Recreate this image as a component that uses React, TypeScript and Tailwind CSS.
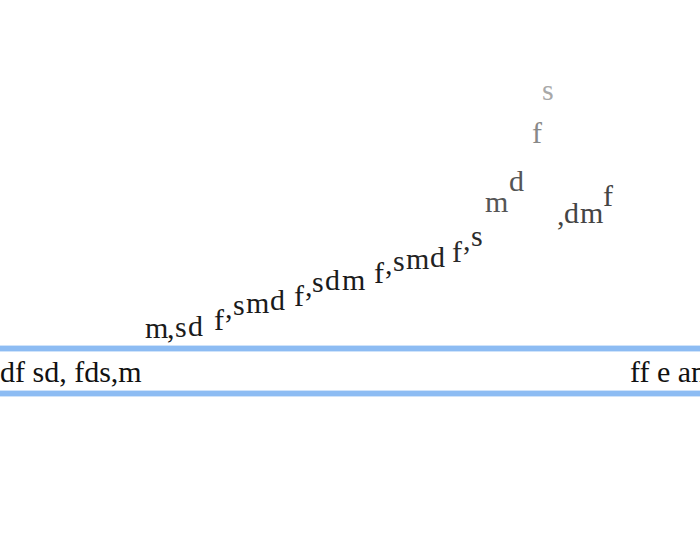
const letters: { ch: string; x: number; base: number; color: string }[] = [
  { ch: "m", x: 145, base: 338, color: "text-[#1a1a1a]" },
  { ch: ",", x: 167, base: 338, color: "text-[#1a1a1a]" },
  { ch: "s", x: 175, base: 337, color: "text-[#1a1a1a]" },
  { ch: "d", x: 188, base: 336, color: "text-[#1a1a1a]" },
  { ch: "f", x: 214, base: 330, color: "text-[#1a1a1a]" },
  { ch: ",", x: 225, base: 318, color: "text-[#1a1a1a]" },
  { ch: "s", x: 233, base: 315, color: "text-[#1a1a1a]" },
  { ch: "m", x: 246, base: 313, color: "text-[#1a1a1a]" },
  { ch: "d", x: 270, base: 310, color: "text-[#1a1a1a]" },
  { ch: "f", x: 294, base: 306, color: "text-[#1a1a1a]" },
  { ch: ",", x: 305, base: 296, color: "text-[#1a1a1a]" },
  { ch: "s", x: 312, base: 292, color: "text-[#1a1a1a]" },
  { ch: "d", x: 325, base: 290, color: "text-[#1a1a1a]" },
  { ch: "m", x: 342, base: 290, color: "text-[#1a1a1a]" },
  { ch: "f", x: 374, base: 283, color: "text-[#1a1a1a]" },
  { ch: ",", x: 385, base: 274, color: "text-[#1a1a1a]" },
  { ch: "s", x: 393, base: 271, color: "text-[#222]" },
  { ch: "m", x: 406, base: 269, color: "text-[#222]" },
  { ch: "d", x: 430, base: 267, color: "text-[#222]" },
  { ch: "f", x: 452, base: 262, color: "text-[#2a2a2a]" },
  { ch: ",", x: 463, base: 250, color: "text-[#2a2a2a]" },
  { ch: "s", x: 471, base: 246, color: "text-[#2a2a2a]" },
  { ch: "m", x: 485, base: 212, color: "text-[#555]" },
  { ch: "d", x: 509, base: 191, color: "text-[#555]" },
  { ch: "f", x: 532, base: 143, color: "text-[#888]" },
  { ch: "s", x: 542, base: 100, color: "text-[#a8a8a8]" },
  { ch: ",", x: 557, base: 225, color: "text-[#444]" },
  { ch: "d", x: 564, base: 223, color: "text-[#444]" },
  { ch: "m", x: 580, base: 223, color: "text-[#444]" },
  { ch: "f", x: 603, base: 206, color: "text-[#444]" },
];

export default function App() {
  return (
    <div className="relative w-[700px] h-[551px] overflow-hidden bg-white font-['Liberation_Serif',serif] text-[30px] leading-none text-[#111]">
      {/* flying letters */}
      {letters.map((l, i) => (
        <span
          key={i}
          className={`absolute ${l.color}`}
          style={{ left: l.x, top: l.base - 25 }}
        >
          {l.ch}
        </span>
      ))}

      {/* focused text field */}
      <div className="pt-[346px]">
        <div className="-mx-[4px] h-[50px] border-y-[5px] border-[#8dbcf3] shadow-[0_0_0_1px_#cfe3fa,inset_0_1px_0_#cfe3fa,inset_0_-1px_0_#cfe3fa] bg-white">
          <div className="flex h-full pt-[6px] pl-[4px] whitespace-nowrap">
            <span>df sd, fds,m</span>
            <span className="ml-auto w-[74px]">ff e an</span>
          </div>
        </div>
      </div>
    </div>
  );
}
